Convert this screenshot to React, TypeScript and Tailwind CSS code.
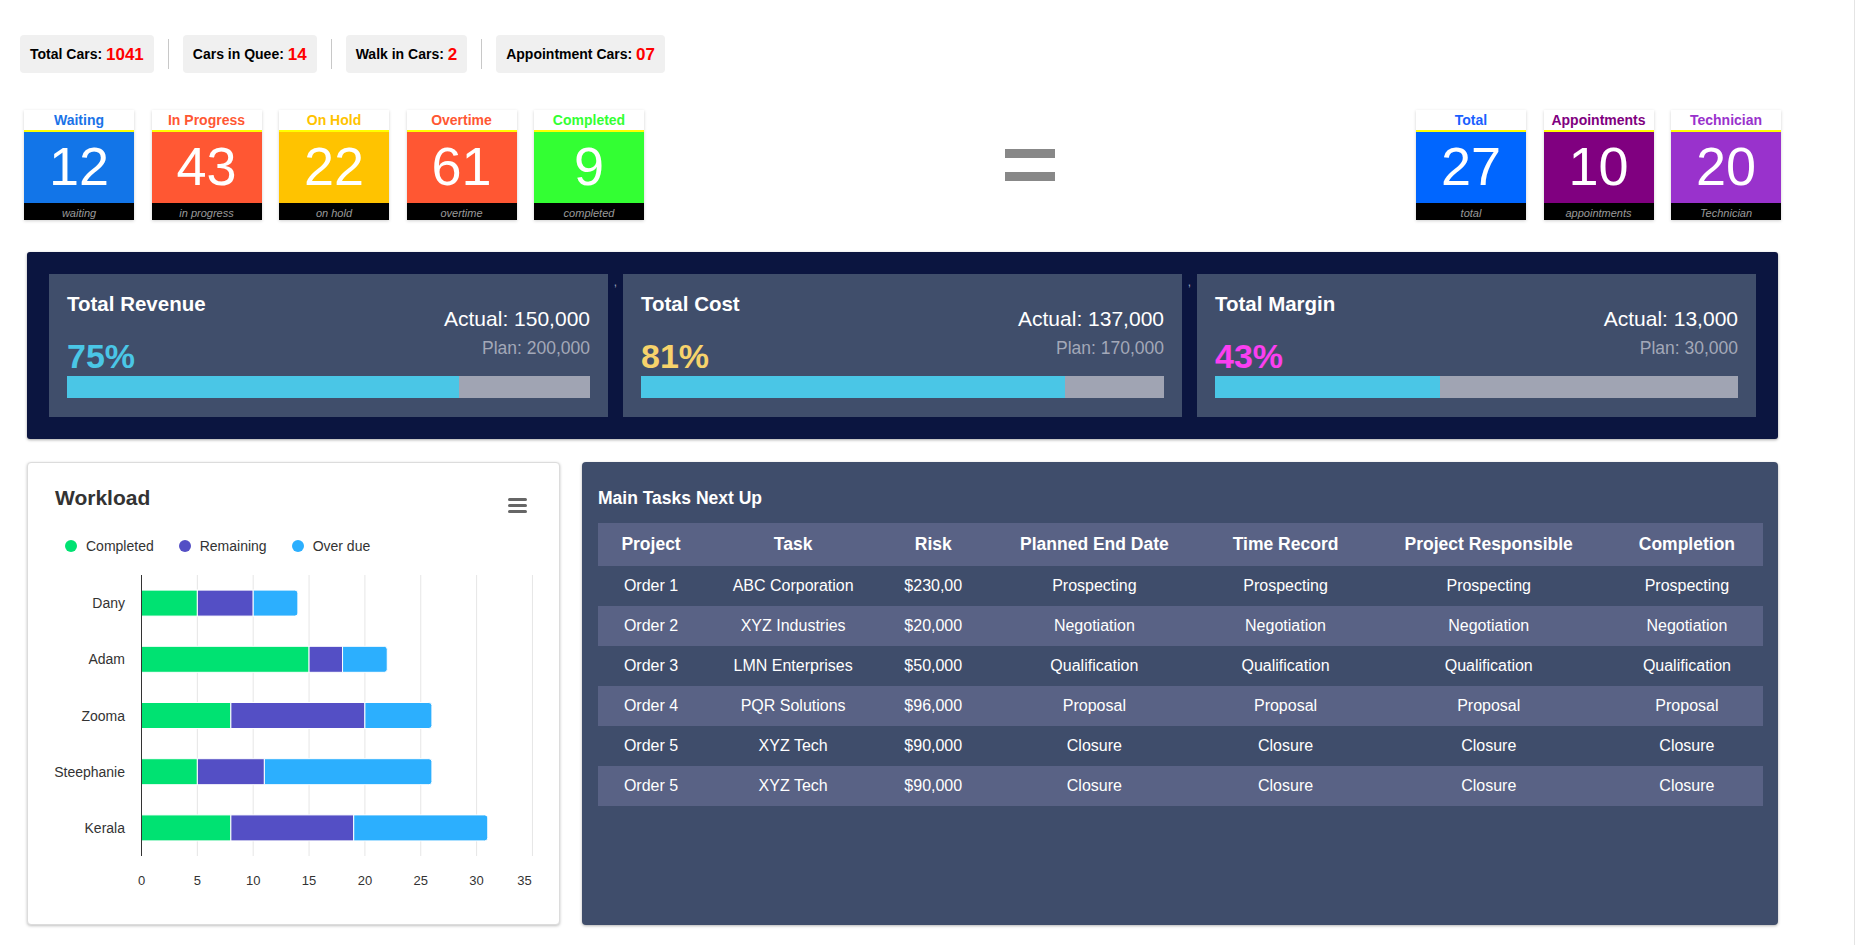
import React from 'react';

const pills = [
  { label: 'Total Cars:', value: '1041' },
  { label: 'Cars in Quee:', value: '14' },
  { label: 'Walk in Cars:', value: '2' },
  { label: 'Appointment Cars:', value: '07' },
];

const leftCards = [
  { title: 'Waiting', value: '12', foot: 'waiting', head: 'text-[#1a73e8]', body: 'bg-[#1275e8]' },
  { title: 'In Progress', value: '43', foot: 'in progress', head: 'text-[#ff5733]', body: 'bg-[#ff5733]' },
  { title: 'On Hold', value: '22', foot: 'on hold', head: 'text-[#ffc300]', body: 'bg-[#ffc300]' },
  { title: 'Overtime', value: '61', foot: 'overtime', head: 'text-[#ff5733]', body: 'bg-[#ff5733]' },
  { title: 'Completed', value: '9', foot: 'completed', head: 'text-[#33ff33]', body: 'bg-[#33ff33]' },
];

const rightCards = [
  { title: 'Total', value: '27', foot: 'total', head: 'text-[#1a5fff]', body: 'bg-[#0066ff]' },
  { title: 'Appointments', value: '10', foot: 'appointments', head: 'text-[#800080]', body: 'bg-[#800080]' },
  { title: 'Technician', value: '20', foot: 'Technician', head: 'text-[#9932cc]', body: 'bg-[#9932cc]' },
];

const kpis = [
  { title: 'Total Revenue', actual: '150,000', plan: '200,000', pct: 75, color: 'text-[#4ac6e6]' },
  { title: 'Total Cost', actual: '137,000', plan: '170,000', pct: 81, color: 'text-[#f7d36b]' },
  { title: 'Total Margin', actual: '13,000', plan: '30,000', pct: 43, color: 'text-[#fb3ff0]' },
];

const workload = [
  { name: 'Dany', c: 5, r: 5, o: 4 },
  { name: 'Adam', c: 15, r: 3, o: 4 },
  { name: 'Zooma', c: 8, r: 12, o: 6 },
  { name: 'Steephanie', c: 5, r: 6, o: 15 },
  { name: 'Kerala', c: 8, r: 11, o: 12 },
];

const rows = [
  ['Order 1', 'ABC Corporation', '$230,00', 'Prospecting'],
  ['Order 2', 'XYZ Industries', '$20,000', 'Negotiation'],
  ['Order 3', 'LMN Enterprises', '$50,000', 'Qualification'],
  ['Order 4', 'PQR Solutions', '$96,000', 'Proposal'],
  ['Order 5', 'XYZ Tech', '$90,000', 'Closure'],
  ['Order 5', 'XYZ Tech', '$90,000', 'Closure'],
];

const colWidths = [106, 178, 102, 220, 162, 244, 152];
const headers = ['Project', 'Task', 'Risk', 'Planned End Date', 'Time Record', 'Project Responsible', 'Completion'];

type Card = { title: string; value: string; foot: string; head: string; body: string };

const StatusCard: React.FC<{ card: Card }> = ({ card }) => (
  <div className="w-[110px] shadow-[0_1px_3px_rgba(0,0,0,0.18)]">
    <div className={`h-[22px] bg-white border-b-2 border-[#ffff00] text-center text-[14px] font-bold leading-[20px] ${card.head}`}>
      {card.title}
    </div>
    <div className={`h-[71px] pb-[4px] flex items-center justify-center text-[54px] leading-none text-white ${card.body}`}>
      {card.value}
    </div>
    <div className="h-[17px] bg-black text-center text-[11px] italic leading-[20px] text-[#9a9a9a]">{card.foot}</div>
  </div>
);

const WorkloadChart: React.FC = () => {
  const x0 = 113.5;
  const k = 11.17;
  const top = 16;
  const band = 56.2;
  const barH = 26;
  const colors = ['#00e272', '#544fc5', '#2caffe'];

  return (
    <svg width="531" height="364" className="block">
      {[5, 10, 15, 20, 25, 30, 35].map(v => (
        <line key={v} x1={x0 + v * k} x2={x0 + v * k} y1={top} y2={297} stroke="#e6e6e6" strokeWidth="1" />
      ))}
      {workload.map((d, i) => {
        const y = top + band * (i + 0.5) - barH / 2;
        const vals = [d.c, d.r, d.o];
        let start = 0;
        return (
          <g key={d.name}>
            {vals.map((v, j) => {
              const xa = x0 + start * k;
              const xb = x0 + (start + v) * k;
              start += v;
              if (j === 2) {
                const p = `M${xa} ${y} H${xb - 3} Q${xb} ${y} ${xb} ${y + 3} V${y + barH - 3} Q${xb} ${y + barH} ${xb - 3} ${y + barH} H${xa} Z`;
                return <path key={j} d={p} fill={colors[j]} stroke="#fff" strokeWidth="1" />;
              }
              return <rect key={j} x={xa} y={y} width={xb - xa} height={barH} fill={colors[j]} stroke="#fff" strokeWidth="1" />;
            })}
            <text x={97} y={y + barH / 2 + 5} textAnchor="end" fontSize="14" fill="#333">
              {d.name}
            </text>
          </g>
        );
      })}
      <line x1={x0} x2={x0} y1={top} y2={297} stroke="#333" strokeWidth="1" />
      {[0, 5, 10, 15, 20, 25, 30, 35].map(v => (
        <text key={v} x={v === 35 ? x0 + v * k - 8 : x0 + v * k} y={326} textAnchor="middle" fontSize="13" fill="#333">
          {v}
        </text>
      ))}
    </svg>
  );
};

export default function App() {
  return (
    <div className="min-h-screen w-full bg-white border-r border-[#e4e4e4] pt-[35px] pb-[20px] font-['Liberation_Sans',Arial,sans-serif]">
      {/* Car counters */}
      <div className="flex items-center pl-[20px] h-[38px]">
        {pills.map((p, i) => (
          <React.Fragment key={p.label}>
            {i > 0 && <div className="mx-[14px] w-px h-[30px] bg-[#c8c8c8]" />}
            <div className="h-[38px] px-[10px] pt-[1px] flex items-center rounded-[4px] bg-[#f0f0f0] text-[14px] font-bold text-black whitespace-nowrap">
              {p.label}&nbsp;<span className="text-[17px] text-[#ff0000]">{p.value}</span>
            </div>
          </React.Fragment>
        ))}
      </div>

      {/* Status cards */}
      <div className="mt-[37px] ml-[24px] w-[1757px] flex items-center justify-between">
        <div className="flex gap-[17.5px]">
          {leftCards.map(c => (
            <StatusCard key={c.title} card={c} />
          ))}
        </div>
        <div className="w-[50px] flex flex-col gap-[14px]">
          <div className="h-[9px] bg-[#888]" />
          <div className="h-[9px] bg-[#888]" />
        </div>
        <div className="flex gap-[17.5px]">
          {rightCards.map(c => (
            <StatusCard key={c.title} card={c} />
          ))}
        </div>
      </div>

      {/* KPI panel */}
      <div className="mt-[32px] ml-[27px] w-[1751px] bg-[#0b1540] rounded-[3px] shadow-[0_1px_3px_rgba(0,0,0,0.35)] p-[22px] flex">
        {kpis.map((k, i) => (
          <React.Fragment key={k.title}>
            {i > 0 && <div className="w-[15px] text-center text-[12px] leading-none pt-[2px] text-[#9aa2b8]">,</div>}
            <div className="w-[559px] bg-[#404e6b] pt-[18px] px-[18px] pb-[19px] text-white">
              <div className="flex justify-between items-start">
                <div>
                  <div className="text-[20.5px] font-bold leading-[24px]">{k.title}</div>
                  <div className={`mt-[21px] text-[34px] font-bold leading-[39px] ${k.color}`}>{k.pct}%</div>
                </div>
                <div className="text-right">
                  <div className="mt-[15px] text-[21px] leading-[24px]">Actual: {k.actual}</div>
                  <div className="mt-[7px] text-[17.5px] leading-[20px] text-[#a3a8b8]">Plan: {k.plan}</div>
                </div>
              </div>
              <div className="h-[22px] bg-[#a0a4b3] flex">
                <div className="h-full bg-[#4ac6e6]" style={{ width: `${k.pct}%` }} />
              </div>
            </div>
          </React.Fragment>
        ))}
      </div>

      {/* Bottom row */}
      <div className="mt-[23px] ml-[27px] w-[1751px] flex gap-[22px]">
        <div className="w-[533px] h-[463px] bg-white border border-[#dcdcdc] rounded-[4px] shadow-[0_1px_3px_rgba(0,0,0,0.25)]">
          <div className="flex justify-between items-start pl-[27px] pr-[32px] pt-[23px]">
            <div className="text-[21px] font-bold leading-[24px] text-[#333]">Workload</div>
            <svg width="19" height="15" className="mt-[12px]">
              <rect x="0" y="0" width="19" height="3" rx="1.5" fill="#666" />
              <rect x="0" y="6" width="19" height="3" rx="1.5" fill="#666" />
              <rect x="0" y="12" width="19" height="3" rx="1.5" fill="#666" />
            </svg>
          </div>
          <div className="mt-[25px] ml-[37px] flex items-center gap-[25px] text-[14px] leading-[16px] text-[#333]">
            <div className="flex items-center">
              <span className="w-[12px] h-[12px] rounded-full bg-[#00e272] mr-[9px]" />
              Completed
            </div>
            <div className="flex items-center">
              <span className="w-[12px] h-[12px] rounded-full bg-[#544fc5] mr-[9px]" />
              Remaining
            </div>
            <div className="flex items-center">
              <span className="w-[12px] h-[12px] rounded-full bg-[#2caffe] mr-[9px]" />
              Over due
            </div>
          </div>
          <div className="mt-[5px]">
            <WorkloadChart />
          </div>
        </div>

        <div className="flex-1 h-[463px] bg-[#3f4d6b] rounded-[4px] shadow-[0_1px_3px_rgba(0,0,0,0.3)] pt-[26px] pl-[16px] pr-[15px] text-white">
          <div className="text-[17.5px] font-bold leading-[20px] mb-[15px]">Main Tasks Next Up</div>
          <table className="w-full table-fixed border-collapse text-center">
            <colgroup>
              {colWidths.map((w, i) => (
                <col key={i} style={{ width: w }} />
              ))}
            </colgroup>
            <thead>
              <tr className="bg-[#596285]">
                {headers.map(h => (
                  <th key={h} className="h-[43px] text-[17.5px] font-bold">
                    {h}
                  </th>
                ))}
              </tr>
            </thead>
            <tbody>
              {rows.map((r, i) => (
                <tr key={i} className={i % 2 === 1 ? 'bg-[#596285]' : ''}>
                  <td className="h-[40px] text-[16px]">{r[0]}</td>
                  <td className="h-[40px] text-[16px]">{r[1]}</td>
                  <td className="h-[40px] text-[16px]">{r[2]}</td>
                  <td className="h-[40px] text-[16px]">{r[3]}</td>
                  <td className="h-[40px] text-[16px]">{r[3]}</td>
                  <td className="h-[40px] text-[16px]">{r[3]}</td>
                  <td className="h-[40px] text-[16px]">{r[3]}</td>
                </tr>
              ))}
            </tbody>
          </table>
        </div>
      </div>
    </div>
  );
}
